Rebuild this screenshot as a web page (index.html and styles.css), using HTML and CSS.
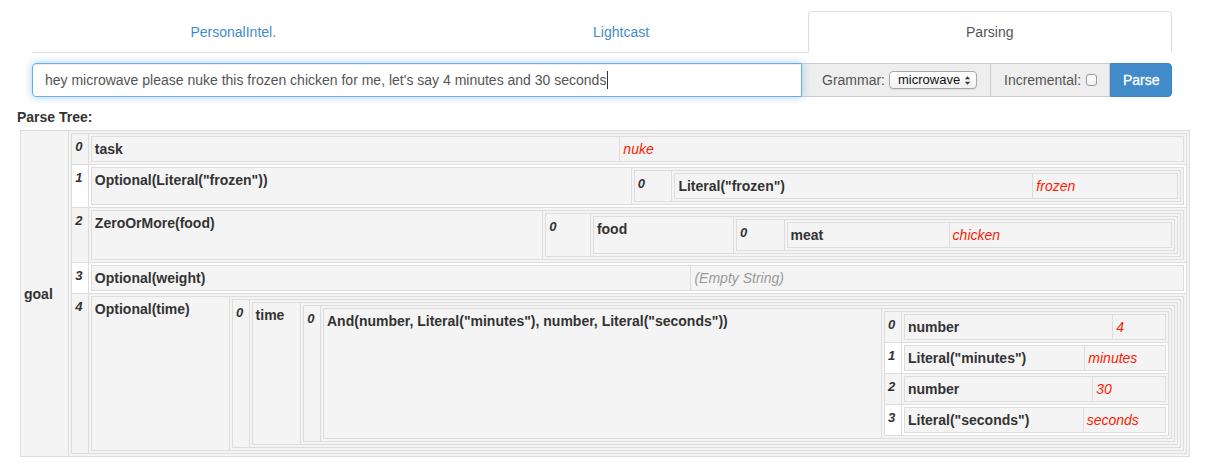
FILE: index.html
```html
<!DOCTYPE html>
<html>
<head>
<meta charset="utf-8">
<title>Parsing</title>
<link rel="stylesheet" href="styles.css">
</head>
<body>
<div class="wrap">
  <ul class="tabs">
    <li class="tab"><a>PersonalIntel.</a></li>
    <li class="tab"><a>Lightcast</a></li>
    <li class="tab active"><a>Parsing</a></li>
  </ul>
  <div class="igroup">
    <div class="query">hey microwave please nuke this frozen chicken for me, let's say 4 minutes and 30 seconds<span class="caret"></span></div>
    <div class="addon addon-grammar">Grammar:<span class="select">microwave<svg class="arr" width="7" height="11" viewBox="0 0 7 11"><path d="M0.8 4.3 L3.5 1.2 L6.2 4.3Z M0.8 6.7 L3.5 9.8 L6.2 6.7Z" fill="#3a3a3a"/></svg></span></div>
    <div class="addon addon-inc">Incremental:<span class="check"></span></div>
    <button class="btn">Parse</button>
  </div>
</div>

<div class="tree-sec">
  <div class="tree-label">Parse Tree:</div>
  <div class="tree">
    <table class="node goal">
      <tr>
        <td class="nm">goal</td>
        <td class="sub">
          <table class="seq">
            <tr><td class="ix">0</td><td class="ch">
              <table class="node"><tr><td class="nm">task</td><td class="val">nuke</td></tr></table>
            </td></tr>
            <tr><td class="ix">1</td><td class="ch">
              <table class="node"><tr><td class="nm">Optional(Literal("frozen"))</td><td class="sub">
                <table class="seq"><tr><td class="ix">0</td><td class="ch">
                  <table class="node"><tr><td class="nm">Literal("frozen")</td><td class="val">frozen</td></tr></table>
                </td></tr></table>
              </td></tr></table>
            </td></tr>
            <tr><td class="ix">2</td><td class="ch">
              <table class="node"><tr><td class="nm">ZeroOrMore(food)</td><td class="sub">
                <table class="seq"><tr><td class="ix">0</td><td class="ch">
                  <table class="node"><tr><td class="nm">food</td><td class="sub">
                    <table class="seq"><tr><td class="ix">0</td><td class="ch">
                      <table class="node"><tr><td class="nm">meat</td><td class="val">chicken</td></tr></table>
                    </td></tr></table>
                  </td></tr></table>
                </td></tr></table>
              </td></tr></table>
            </td></tr>
            <tr><td class="ix">3</td><td class="ch">
              <table class="node"><tr><td class="nm">Optional(weight)</td><td class="val empty">(Empty String)</td></tr></table>
            </td></tr>
            <tr><td class="ix">4</td><td class="ch">
              <table class="node"><tr><td class="nm">Optional(time)</td><td class="sub">
                <table class="seq"><tr><td class="ix">0</td><td class="ch">
                  <table class="node"><tr><td class="nm">time</td><td class="sub">
                    <table class="seq"><tr><td class="ix">0</td><td class="ch">
                      <table class="node"><tr><td class="nm">And(number, Literal("minutes"), number, Literal("seconds"))</td><td class="sub">
                        <table class="seq">
                          <tr><td class="ix">0</td><td class="ch">
                            <table class="node"><tr><td class="nm">number</td><td class="val">4</td></tr></table>
                          </td></tr>
                          <tr><td class="ix">1</td><td class="ch">
                            <table class="node"><tr><td class="nm">Literal("minutes")</td><td class="val">minutes</td></tr></table>
                          </td></tr>
                          <tr><td class="ix">2</td><td class="ch">
                            <table class="node"><tr><td class="nm">number</td><td class="val">30</td></tr></table>
                          </td></tr>
                          <tr><td class="ix">3</td><td class="ch">
                            <table class="node"><tr><td class="nm">Literal("seconds")</td><td class="val">seconds</td></tr></table>
                          </td></tr>
                        </table>
                      </td></tr></table>
                    </td></tr></table>
                  </td></tr></table>
                </td></tr></table>
              </td></tr></table>
            </td></tr>
          </table>
        </td>
      </tr>
    </table>
  </div>
</div>
</body>
</html>
```

FILE: styles.css
```css
* { box-sizing: border-box; }
html, body { margin: 0; padding: 0; background: #fff; }
body {
  font-family: "Liberation Sans", Arial, Helvetica, sans-serif;
  font-size: 14px;
  line-height: 20px;
  color: #333;
}

/* ---------- tabs ---------- */
.wrap { width: 1140px; margin-left: 32px; padding-top: 11px; }
.tabs {
  display: flex;
  list-style: none;
  margin: 0;
  padding: 0;
  border-bottom: 1px solid #ddd;
}
.tab { flex: 1 1 auto; margin-bottom: -1px; text-align: center; }
.tab a {
  display: block;
  padding: 10px 15px;
  line-height: 20px;
  border: 1px solid transparent;
  border-radius: 4px 4px 0 0;
  color: #428bca;
  text-decoration: none;
}
.tab.active a {
  color: #555;
  background: #fff;
  border-color: #ddd #ddd transparent;
}

/* ---------- input group ---------- */
.igroup { display: flex; height: 34px; margin-top: 10px; }
.query {
  flex: 1 1 auto;
  border: 1px solid #66afe9;
  border-radius: 4px 0 0 4px;
  padding: 6px 12px;
  color: #555;
  white-space: nowrap;
  overflow: hidden;
  position: relative;
  z-index: 1;
  box-shadow: inset 0 1px 1px rgba(0,0,0,.075), 0 0 8px rgba(102,175,233,.6);
}
.caret {
  display: inline-block;
  width: 1px;
  height: 18px;
  background: #333;
  vertical-align: -4px;
  margin-left: 1px;
}
.addon {
  display: flex;
  align-items: center;
  background: #eee;
  border: 1px solid #ccc;
  border-left: 0;
  color: #555;
  white-space: nowrap;
}
.addon-grammar { width: 189px; padding: 0 12px 0 20px; }
.addon-inc { width: 119px; padding: 0 12px 0 13px; }
.select {
  display: inline-flex;
  align-items: center;
  justify-content: space-between;
  width: 88px;
  height: 18px;
  margin-left: 4px;
  padding: 0 5px 0 8px;
  border: 1px solid #a9a9a9;
  border-radius: 4px;
  background: linear-gradient(#ffffff, #f1f1f1);
  box-shadow: 0 1px 1px rgba(0,0,0,.08);
  color: #111;
  font-size: 13px;
  line-height: 16px;
}
.arr { display: block; }
.check {
  display: inline-block;
  width: 12px;
  height: 12px;
  margin-left: 5px;
  border: 1px solid #9a9a9a;
  border-radius: 3px;
  background: linear-gradient(#ffffff, #f0f0f0);
}
.btn {
  width: 62px;
  height: 34px;
  padding: 6px 12px;
  background: #428bca;
  border: 1px solid #3b84c4;
  border-radius: 0 4px 4px 0;
  color: #fff;
  font-family: inherit;
  font-size: 14px;
  line-height: 20px;
  -webkit-text-stroke: 0.3px #fff;
}

/* ---------- parse tree ---------- */
.tree-sec { margin: 10px 0 0 17px; }
.tree-label { font-weight: bold; }
.tree { width: 1170px; margin: 3px 0 0 3px; }

table.node, table.seq { border-collapse: collapse; width: 100%; }
.node { background: #f4f4f4; border: 1px solid #ddd; }
.seq { border: 1px solid #ddd; }
.node > tbody > tr > td,
.seq > tbody > tr > td {
  border: 1px solid #ddd;
  vertical-align: top;
}
.nm { padding: 2px 3px; font-weight: bold; white-space: nowrap; }
.val { padding: 2px 3px; color: #ff1a00; font-style: italic; white-space: nowrap; }
.val.empty { color: #999; }
.sub { padding: 2px; }
.seq > tbody > tr:nth-child(odd) > td { background: #f4f4f4; }
.seq > tbody > tr:nth-child(even) > td { background: #fff; }
.ix {
  padding: 4px 1px 4px 3px;
  font-style: italic;
  font-weight: bold;
  font-size: 13px;
  line-height: 18px;
}
.ch { padding: 2px; }
.goal > tbody > tr > td.nm { vertical-align: middle; }
```
